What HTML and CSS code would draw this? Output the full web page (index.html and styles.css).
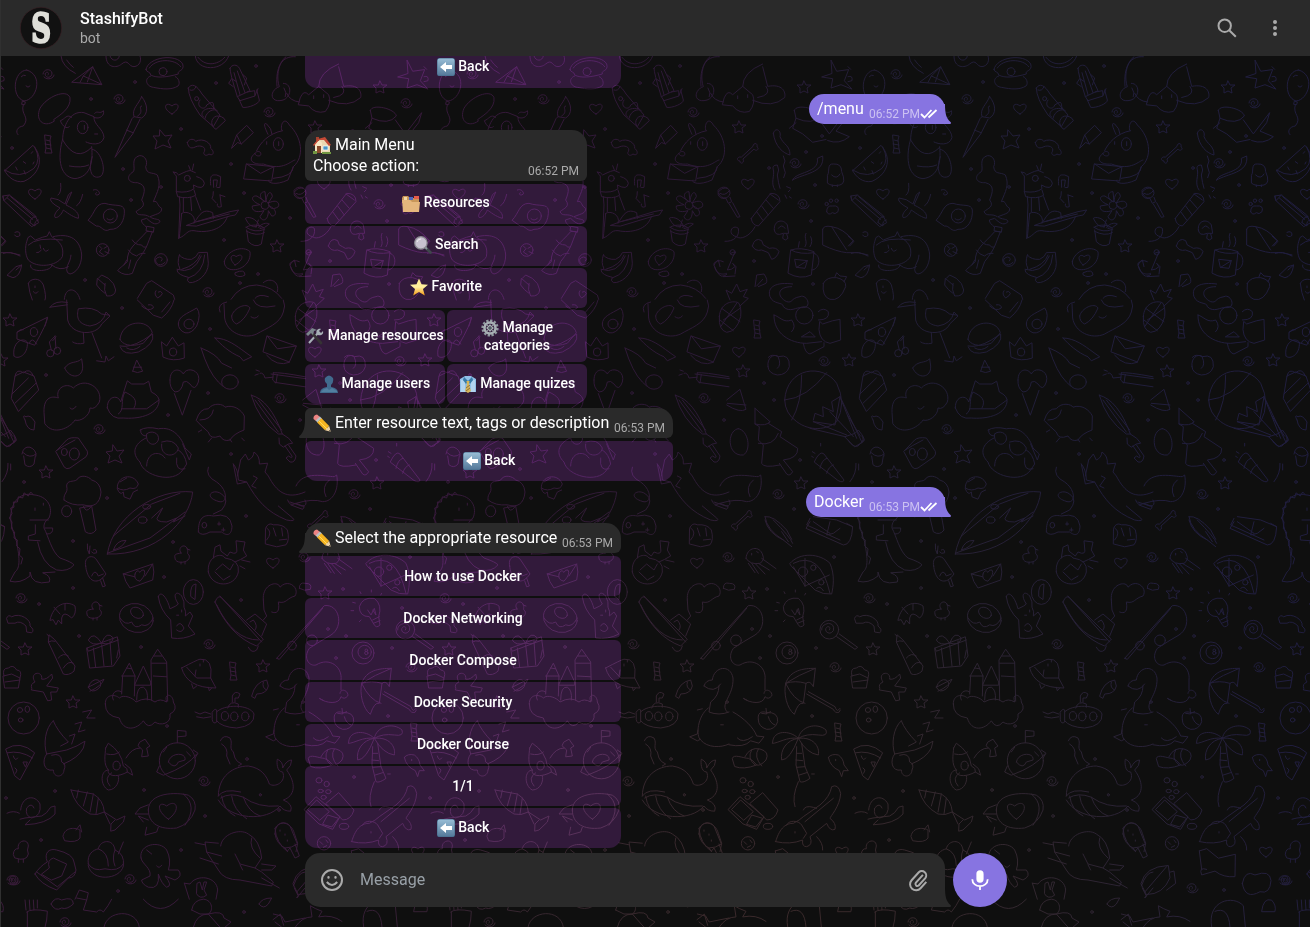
FILE: index.html
```html
<!DOCTYPE html>
<html lang="en">
<head>
<meta charset="utf-8">
<title>StashifyBot</title>
<link rel="stylesheet" href="styles.css">
</head>
<body>
<svg class="wallpaper" width="1310" height="927" viewBox="0 0 1310 927" aria-hidden="true">
<defs>
<linearGradient id="hue" x1="0" x2="1"><stop offset="0" stop-color="#441f45"/><stop offset=".4" stop-color="#3c1b42"/><stop offset=".52" stop-color="#331c3f"/><stop offset=".68" stop-color="#27223f"/><stop offset="1" stop-color="#24214a"/></linearGradient>
<radialGradient id="warm" gradientUnits="userSpaceOnUse" cx="780" cy="960" r="560"><stop offset="0" stop-color="#453030"/><stop offset=".45" stop-color="#403033" stop-opacity=".8"/><stop offset="1" stop-color="#3a2a38" stop-opacity="0"/></radialGradient>
<path id="st" d="M0-6L2-2L7-2L3 1L4 6L0 4L-4 6L-4 1L-7-2L-2-2Z"/>
<path id="he" d="M0 5C-11-1-6-8 0-3C5-8 11-2 0 5Z"/>
<path id="sp" d="M0 1C2-2-2-3-3 0C-2 5 4 4 4-1C3-6-5-5-5 0M-4 3C0 7 6 4 6 1"/>
<circle id="dt" r="1.3"/>
<path id="cd" d="M-3-9L3-8L2-4L3 5L4 9L-3 9L-2 4L-3-4ZM-2-4L2-3M-3 0L3 1M-2 4L3 5"/>
<path id="bn" d="M-7 4C-11 3-12 8-8 8C-8 12-3 10-5 6L6-4C8-1 12-4 9-6C10-11 5-10 5-7Z"/>
<path id="dk" d="M-2-2C-6-7 1-12 4-7C6-3 3-2 6 0C9 8-8 10-8 3C-9-1-7-1-2-2ZM4-6L7-5M-2 7V9M2 7V9"/>
<g id="tile">
<g transform="scale(.33333)">
<path d="M80 210C40 212 32 290 72 303C110 300 132 225 80 210M68 304L76 306L74 314L66 313ZM70 314C60 345 92 350 70 378C52 380 45 395 54 404M64 230Q70 223 76 226M78 258Q84 266 90 258"/>
<path d="M183 168Q186 200 226 220M200 180Q210 195 220 202M216 246L278 200L305 253ZM250 228L278 200L262 246M250 228L240 247M250 228L305 253"/>
<path d="M318 168C318 205 350 205 365 192C385 175 385 200 402 200C420 198 425 180 420 168M330 168C335 185 355 185 358 168"/>
<path d="M438 208C445 170 530 160 548 192C555 215 530 210 535 222C500 232 470 235 452 225C452 214 438 218 438 208ZM448 204C465 175 525 175 542 200M452 228C430 236 440 260 460 262C490 268 515 270 534 258C542 250 535 232 526 230"/><circle cx="489" cy="215" r="12"/>
<path d="M586 168C590 215 670 215 686 168M594 172C620 205 660 190 674 172M690 205C695 192 712 192 719 206L750 272L712 290Q690 220 690 205ZM700 260L686 250L695 236L708 244M733 255L740 234L730 225M742 276L764 272L765 288L720 302L712 290M765 286L774 266M718 300L728 322C745 325 780 310 778 300L770 270M712 213L735 278M702 218L720 284"/>
<path d="M858 170C830 190 830 240 838 260C810 270 808 305 840 302C875 300 880 250 850 250M860 280Q870 303 898 306M852 264Q862 280 856 290"/>
<path d="M162 364C130 385 105 360 120 325C140 290 200 265 210 293C214 325 180 345 162 358Z"/>
<path d="M188 418C188 380 210 330 252 338L282 350C280 375 310 385 312 412C305 440 270 432 258 426M215 352C200 340 195 358 181 362C188 380 200 388 208 380M282 352C300 360 315 345 310 332C300 344 292 330 284 340M188 418C175 460 172 530 225 536C270 530 280 490 275 440M188 420Q228 490 275 442M277 448C305 452 322 520 300 530C270 540 265 500 277 470M208 498Q245 505 266 495"/><ellipse cx="248" cy="382" rx="16" ry="19"/><path d="M253 376v12M284 402h9"/>
<path d="M425 290C445 315 445 342 425 354L402 350C395 325 415 315 425 290ZM402 350L396 356L372 410L345 472L398 402L420 358M379 390L399 398M425 318C412 320 435 335 413 348"/>
<path d="M565 264C575 248 590 255 606 282L660 345L640 380L600 345Q565 295 565 264ZM570 270Q582 275 588 260M600 300C585 320 615 335 620 315C650 295 635 320 645 326C600 320 602 350 610 350M615 355C620 330 645 325 652 332M636 374C630 355 650 338 672 355L676 362L648 388Q640 385 636 374"/><circle cx="590" cy="296" r="6"/>
<path d="M14 512L99 436C130 470 125 520 72 544C45 550 23 530 14 512ZM14 510Q60 540 102 505Q125 480 104 441M47 501l5 9M70 485l7 5M98 455l-4 5M102 486l-3 6M72 512l4 10"/>
<path d="M562 428C568 412 585 418 587 424C610 412 635 430 632 445C645 455 640 470 627 462C615 472 608 460 613 455C620 440 600 435 588 440C568 450 565 438 562 428ZM695 444L710 405L740 376L760 398L724 432L714 428ZM710 405L724 432"/>
<path d="M804 403C795 385 788 365 800 372Q815 385 816 402M845 390C840 370 855 350 868 375C905 410 915 470 880 500L864 540C820 560 800 545 806 540M770 452C780 430 805 400 848 392M765 460C770 450 785 455 782 462C785 470 765 470 765 460C740 480 760 495 790 492C850 515 875 480 885 480M740 492L822 500L815 543L732 537ZM740 492L782 520L822 500M820 535Q880 530 880 500"/><ellipse cx="835" cy="432" rx="15" ry="19"/><path d="M836 425v12M800 425v8"/>
<path d="M9 588L28 585L104 645L116 668L95 680L12 602ZM9 588L12 602L28 585M22 594L98 658M90 668Q90 652 108 650M90 668L105 678Q102 662 115 660M32 590L105 652"/>
<path d="M182 550Q185 580 174 585M248 583Q242 610 230 617M215 577L198 615C230 630 238 642 235 655C215 650 198 635 190 630C185 642 175 655 165 652C160 645 172 630 180 624Q145 605 153 594Q175 595 195 612L205 585Z"/>
<path d="M265 660C285 640 285 610 315 610C345 620 370 610 373 630C375 660 360 690 330 688C310 700 305 675 290 678ZM321 656Q330 665 340 655"/><circle cx="331" cy="648" r="21"/>
<path d="M440 695C410 730 380 745 382 785C360 805 355 808 353 812Q375 830 397 820L410 785C445 740 440 735 457 696ZM385 750Q395 765 410 768Q420 758 435 760M397 720Q405 735 425 735Q430 745 440 740M372 795L380 780M386 805L392 780M440 680L438 692L460 697L462 684ZM440 682C430 672 425 670 424 660L440 655C460 675 470 675 480 665C480 655 460 660 450 650C475 640 485 640 485 625C470 618 475 600 460 605C472 575 485 555 472 525C455 515 440 525 437 500C445 485 435 465 418 467C390 475 408 505 400 515C375 530 385 550 412 548C440 555 435 575 425 600C440 620 420 625 408 635C415 652 430 638 448 650"/>
<path d="M520 516Q530 515 536 525Q565 510 572 512L586 518M572 512L566 497M577 510L581 492M520 516Q525 525 529 528L529 575Q565 580 582 566L580 555Q610 572 613 550Q610 535 590 530M529 575L533 590Q565 598 587 586L582 570M538 590L540 615L536 716M550 594V635M572 592L575 632M587 590L602 630M545 640Q540 690 538 714C560 705 560 690 582 692C620 700 670 690 682 650M545 640C560 630 590 645 582 670C600 640 610 625 638 638L640 655M560 676L590 665L690 635L716 630L706 645L690 648L590 678ZM590 665L688 642M632 555C628 520 640 525 650 525L662 530L660 562Q645 565 650 555L652 540H640L641 562M640 575Q640 590 636 595L648 608M660 585L675 590M660 585L664 620Q650 625 652 612"/><circle cx="562" cy="535" r="9"/>
<path d="M795 605C775 595 778 575 795 575L798 605C800 575 815 570 817 590L804 610C830 595 840 610 835 620C820 630 810 625 808 618C835 630 828 650 815 648L805 632C805 665 785 665 780 650L792 632C765 640 755 630 757 618L780 614C745 600 758 585 770 588ZM780 682C770 650 740 650 736 655Q750 685 770 680M768 682L775 660M775 682C790 665 805 670 808 672Q795 685 780 686M738 682C755 670 790 675 794 688Q765 700 738 682M740 690L745 725Q765 745 784 732L792 690M740 694Q770 710 793 698"/><circle cx="795" cy="616" r="12"/>
<path d="M85 712L92 708L106 720Q130 710 142 708L148 695L155 710C180 725 193 740 187 770C170 800 110 805 85 780C75 765 75 740 80 725ZM85 735Q110 710 187 720M120 735L122 745M124 750Q118 760 110 758M130 745Q135 760 145 750M160 710C200 700 240 710 245 765C245 800 225 820 210 822Q190 818 210 780Q215 760 212 765M92 795C85 820 160 815 155 795M155 795Q180 815 205 800"/>
<path d="M10 760Q30 752 60 768M22 825L48 800L65 795Q60 830 40 833ZM48 810L65 795M280 570C290 565 300 575 298 582C290 590 280 580 290 578M45 697Q60 690 60 706Q50 715 44 705M0 708L18 724L5 738"/>
<circle cx="308" cy="750" r="19"/><path d="M298 738l8 8l-8 10l12 8M312 745l10-6M315 755l12 5"/><circle cx="483" cy="780" r="19"/><path d="M484 783q8-10-6-12q-16 4-9 18q12 12 26-2"/>
<path d="M538 765Q550 780 575 778Q592 770 595 758L622 757L625 790C625 825 590 850 568 848Q558 842 565 832Q535 825 531 812L540 805Q530 790 538 765ZM531 808Q580 825 604 768M565 834Q610 820 614 765M545 808Q590 795 600 765"/>
<path d="M673 785C680 750 730 735 750 755C755 790 720 815 690 808Q672 802 673 785ZM706 818Q735 805 735 825Q720 835 706 825ZM705 795C680 770 700 760 708 770C730 755 735 780 705 795Z"/>
<path d="M870 795Q878 775 898 785M872 800Q885 835 900 828M884 575Q895 560 910 565M884 580Q890 595 905 594M85 850C90 835 120 830 130 855Q140 890 135 900M85 850Q88 880 97 900M105 858v5M100 875q8 10 14 0M193 898C195 860 230 860 240 898M315 855L292 835L290 855Q300 870 315 880M295 835L305 825L325 835Q345 850 347 870Q345 890 320 888Q310 870 315 850M412 895L440 850L455 842L520 885L524 898M468 872q-8 10 5 22q14-8 14-14q-4-10-12-4M693 898Q720 855 770 855Q820 860 845 895M790 848C810 830 840 845 832 875M765 895Q775 880 805 890"/>
<path d="M0 230Q15 225 12 242L0 245M0 200L8 208"/>
</g>
<use href="#he" x="172" y="109"/><use href="#he" x="35" y="194"/><path d="M160 130L165 136L172 135L168 141L171 148L163 145L155 149L157 141L153 136L159 136Z"/><use href="#st" x="277" y="246"/>
<use href="#sp" x="48" y="74"/><use href="#sp" x="119" y="99"/><use href="#sp" x="269" y="112"/><use href="#sp" x="208" y="292"/><use href="#cd" x="48" y="144"/>
<use href="#dt" x="91" y="99"/><use href="#dt" x="135" y="82"/><use href="#dt" x="216" y="83"/><use href="#dt" x="256" y="66"/><use href="#dt" x="181" y="129"/><use href="#dt" x="12" y="148"/><use href="#dt" x="123" y="169"/><use href="#dt" x="161" y="187"/><use href="#dt" x="231" y="164"/><use href="#dt" x="131" y="200"/><use href="#dt" x="244" y="193"/><use href="#dt" x="290" y="218"/><use href="#dt" x="224" y="240"/><use href="#dt" x="258" y="274"/><use href="#dt" x="85" y="280"/><use href="#dt" x="240" y="283"/>
<g transform="translate(0 300) scale(.33333 .4)">
<path d="M150 18Q165 0 202 6M150 18L202 12M200 0L203 50C215 90 290 90 305 60L330 40L318 30Q310 60 270 65C230 60 230 40 235 22Q280 15 305 35L328 38M250 82L252 108Q230 112 218 105M276 82L305 145M290 152L315 155L318 140L325 152L342 142"/>
<path d="M52 80L143 43Q140 60 104 113L52 98ZM52 80Q60 72 70 74M42 140C35 110 65 90 82 105C85 140 50 150 42 140M88 108Q95 90 110 110M142 44L135 65"/><circle cx="102" cy="80" r="11"/>
<path d="M165 90L148 105L154 125M165 90L168 122M158 102l10-10"/><ellipse cx="151" cy="133" rx="11" ry="9"/><ellipse cx="172" cy="127" rx="10" ry="9"/>
<path d="M194 170C210 150 230 160 245 147L248 165C250 195 210 200 194 170M360 98C365 50 445 45 457 82L430 108C390 120 365 110 360 98ZM360 115Q390 120 430 100L458 85Q465 110 415 130Q370 140 361 118M380 120Q400 130 420 116"/>
<path d="M412 0L460 38L485 45Q515 25 522 0M425 15Q445 30 460 20Q460 10 445 12M485 30L510 5M535 60C535 40 560 35 590 20Q605 35 590 65Q575 85 555 82Q535 75 535 60"/><ellipse cx="567" cy="60" rx="15" ry="12"/>
<path d="M660 30Q650 10 680 5M672 10L674 45C680 80 730 100 770 85C800 70 840 60 850 30Q858 15 850 0M695 40C700 20 740 5 750 20Q735 50 710 60Q695 55 695 40M760 0Q770 25 825 15M753 42Q765 50 775 40"/>
<path d="M485 105L500 115L517 93L535 115L552 107L553 145Q520 155 490 143ZM645 95C680 95 710 115 735 130L755 142L730 152L720 142C690 132 660 110 645 95ZM603 120Q650 135 665 158L695 170M603 120Q625 180 655 205L668 215"/><ellipse cx="690" cy="205" rx="25" ry="18"/><ellipse cx="519" cy="130" rx="11" ry="10"/>
<path d="M802 90L889 115L868 155L790 130ZM802 90L832 122L889 115M800 138Q830 168 868 156"/>
<path d="M398 178L410 150L428 178Q412 185 398 178M400 168H425M34 245L45 190L70 180L102 190L116 225L56 278ZM45 190Q50 170 70 182Q90 168 100 190M36 235L85 195M45 258L108 208"/>
<path d="M510 200C510 170 540 170 550 185C560 165 605 175 595 205Q585 230 570 210Q560 200 550 205Q545 230 525 230Q508 220 510 200M523 234L547 288L573 226"/>
<path d="M132 280C130 240 160 240 175 245C165 220 200 205 220 220C255 190 310 220 298 255Q285 275 270 270C270 290 240 305 225 300C210 320 160 340 135 310ZM210 270q8 8 18-4"/>
<path d="M322 270C320 240 355 235 362 255L375 220L382 202L395 210H432L446 203L454 230Q480 240 477 255C470 290 410 298 370 295Q335 300 322 270ZM355 285C375 275 360 250 375 230C400 240 415 250 402 270M365 272H440L477 250"/>
<path d="M589 300Q600 270 625 272C640 255 670 260 675 268C700 260 725 275 733 290L732 325Q700 335 690 350Q670 355 660 340Q630 350 625 330L605 315ZM600 300Q635 300 640 275M635 345L625 355M690 348L695 355M595 330L605 325M725 345L733 352"/>
<path d="M820 182Q840 180 915 192M825 206L915 217M820 182L818 200L828 208L832 186M819 193L795 195Q790 180 780 183M768 175l10 3M765 188l10-3"/>
<path d="M754 238Q810 250 847 335L835 335Q775 300 754 238ZM765 250L835 330M775 250L845 325M847 335Q870 345 878 358L865 360L850 368L838 360L837 345M865 362L888 390Q885 408 870 405L858 395L866 390Q878 398 876 390L855 365"/>
<path d="M75 300Q65 285 78 292Q90 285 105 305L102 325Q80 325 75 300M0 290L37 340M47 350L30 365Q15 370 0 350M42 340Q50 350 40 358M66 385Q70 365 90 368Q110 375 108 390M70 382Q90 398 108 385M71 390L75 412Q90 422 102 410L106 390"/>
<path d="M168 378L200 350Q210 342 235 345L262 378Q265 385 258 392L210 420Q200 425 193 418ZM170 376Q190 365 225 350"/><circle cx="193" cy="380" r="9"/><circle cx="223" cy="385" r="15"/>
<path d="M420 325Q440 315 475 322C520 315 545 345 555 370L574 385L568 400L548 360M440 335C435 360 465 370 475 350C480 330 450 325 440 335M422 325Q420 340 440 340M485 360C480 395 530 395 535 370Q520 345 485 355M438 345C400 360 395 385 420 405C430 440 520 460 548 425L560 410Q555 385 535 375M440 415C440 380 480 375 495 395M530 395Q525 430 555 422"/>
<path d="M625 418Q615 440 650 455C685 475 685 515 650 502C610 490 640 470 665 485Q690 500 665 525L640 535M595 580C595 545 610 535 640 540Q690 530 696 565C695 590 680 590 665 580H630Q605 592 595 580"/><circle cx="613" cy="563" r="7"/><path d="M657 555v8M653 560h9M670 570v8M665 575h10"/>
<path d="M700 410Q715 425 715 450L740 455C770 500 800 530 860 550Q890 555 878 545L835 515M722 400L736 385L745 400Q760 395 762 380Q780 390 778 410L803 408L795 430L805 440C830 480 860 500 915 480M722 400L712 440M700 410L712 460L740 455M870 505L905 515Q925 515 915 500M768 470L755 465L772 445L760 440"/>
<path d="M352 470C350 440 400 430 415 460Q410 475 390 470Q370 480 352 470M352 472Q360 490 370 480L372 492L390 498L400 480L413 475M360 455L380 445"/>
<path d="M192 500C190 480 205 485 200 465C200 450 220 455 230 450C240 435 265 440 275 450Q300 455 303 480C300 510 280 520 250 512Q215 515 192 500M240 520L275 515L288 575Q275 590 257 580ZM250 515Q258 535 272 518"/><ellipse cx="200" cy="528" rx="15" ry="14"/>
<path d="M322 635C340 540 470 470 578 480C570 550 470 640 322 635ZM340 590L455 510L540 483M322 633L450 595L555 530M455 545L488 520L475 540Q460 555 500 555L530 545L520 555L555 540"/><ellipse cx="440" cy="517" rx="12" ry="6"/><ellipse cx="428" cy="550" rx="13" ry="8"/><path d="M340 625q10-25 38-24q-10 18-38 24"/>
<path d="M32 540C35 500 65 480 100 487C145 490 160 520 147 545Q130 555 132 570C145 590 155 630 180 645Q215 655 222 662Q205 680 170 675Q125 660 113 605M32 540Q30 560 50 605C60 650 60 670 45 680L30 703Q60 710 90 690V680Q95 715 148 705Q155 690 128 682L165 680M90 550H145M106 562V585L85 590L85 600L120 602M135 570L158 570Q160 585 142 585M105 520v6M130 508v5"/>
<path d="M100 487L92 480L85 490L72 482L68 495L55 492L52 505L40 505L42 518L32 520L36 534L28 545L36 555L34 572L44 580L42 595L52 600L50 615L60 622L58 638L68 645L63 660"/>
<path d="M257 665C250 640 280 635 290 650L318 685Q310 695 300 700C275 710 260 690 257 665ZM275 690Q285 670 295 690L310 685M302 702L308 717L316 715L308 695M262 610Q260 625 268 635L270 615M280 625Q290 620 290 632Q280 636 275 630"/>
<path d="M370 685L458 660Q465 680 458 700L390 720Q375 705 370 685ZM370 685L405 692M458 660L435 690M405 685q-5 15 15 18q20-18 12-28q-8-2-12 6q-10-10-15 4"/>
<path d="M625 680C620 640 665 630 675 645Q720 650 715 680C705 720 635 720 625 680ZM640 645L645 618L660 612L663 628L682 640L690 630Q715 640 710 620L708 602L735 605L730 625L740 640Q720 650 705 655M725 650L750 655M720 665L735 672M648 675L668 660L690 675L700 660M645 680L670 700L690 690"/>
<path d="M797 570Q805 555 820 562Q850 560 862 575Q870 600 858 612L830 617L797 610ZM800 600Q820 580 800 570M820 570L828 590M845 570L848 590M838 600L860 598"/>
<path d="M475 742C480 725 500 740 510 772Q530 765 535 760C515 735 530 725 545 740Q555 755 552 768Q560 780 556 790L570 780L578 790L565 815L585 835Q550 850 515 845L512 800Q480 775 475 742ZM530 815Q540 800 552 820Q545 835 530 825M530 788h6M545 775v5"/><ellipse cx="580" cy="730" rx="30" ry="31"/><path d="M572 740Q570 710 588 710L585 748Z"/>
<path d="M150 800C160 760 200 750 225 765Q230 785 215 795Q190 775 185 795L185 810L175 800L168 812L160 800ZM162 768L180 785M195 760V775"/>
<ellipse cx="409" cy="795" rx="51" ry="36" transform="rotate(8 409 795)"/><ellipse cx="411" cy="782" rx="20" ry="13" transform="rotate(20 411 782)"/><path d="M360 795Q375 815 395 805Q405 825 425 812Q445 820 460 795"/>
<path d="M20 795Q25 785 35 792C60 780 95 800 90 815Q105 825 95 832L80 830L78 815Q60 800 45 808L25 808Z"/>
<path d="M645 755Q655 735 665 745L790 848L770 865Q690 840 645 755ZM660 740L785 855M650 762Q700 850 775 850M740 800L765 785L800 810L785 840M750 805L760 800Q775 815 765 825M745 868Q755 885 770 875L775 865M790 750C785 710 835 700 840 718C865 695 900 720 885 740C860 745 860 760 835 755C840 780 830 785 815 780M790 750L792 775L800 790L790 800"/>
<path d="M147 838L145 855L190 935Q205 940 222 928L225 915L165 850ZM145 855Q155 850 165 853M175 895Q190 880 205 890M190 920Q205 900 220 908M141 836l6 4"/>
<path d="M261 870L352 842L360 890L340 915L270 920ZM261 870L265 878L355 850M280 870L287 918M305 862L312 915M330 852L335 912M305 858Q280 825 265 850Q275 865 305 858Q320 825 340 845Q335 865 305 858M355 875L350 895"/>
<path d="M365 985L368 938L388 908L405 940L403 990M365 940H405M405 960L430 915L452 955V963H405ZM455 1000L453 900L473 873L500 905L503 1003M455 908H500M410 1000Q410 965 430 968Q445 975 442 1000M460 940L500 942M380 920L395 922M462 890H485"/><path d="M316 1010C315 985 345 985 358 995C370 985 400 995 408 1005Q440 990 465 1005Q480 995 500 1005C490 980 520 985 520 1005Q535 1025 510 1035C515 1060 480 1065 465 1055Q445 1075 430 1052C410 1075 370 1080 358 1045Q315 1040 316 1010ZM340 1000C330 985 350 970 365 980"/>
<path d="M545 920Q590 900 600 898Q640 895 632 945L648 970Q560 970 545 920ZM560 918L590 945L632 945M575 960L580 972L590 965M625 968L628 977L635 970M600 910v5M610 900v5M588 925L585 940"/>
<path d="M10 940L35 935L60 945L55 970H15ZM12 940Q5 920 25 920Q40 910 50 925Q68 925 60 945M15 955L60 950"/>
<path d="M95 970Q90 960 105 955C85 930 130 925 125 948Q140 950 155 935L158 945L140 965L175 970L170 980L152 980L155 1000L143 1002L130 980L95 975Z"/>
<ellipse cx="71" cy="1045" rx="47" ry="40"/><ellipse cx="60" cy="1025" rx="8" ry="6"/><ellipse cx="82" cy="1023" rx="7" ry="8"/><ellipse cx="62" cy="1050" rx="7" ry="5"/>
<path d="M265 968Q275 945 295 950Q310 960 295 972Q275 985 265 968M265 968L312 948Q305 965 270 978M755 990Q765 955 800 950L805 965Q800 985 770 985L765 995ZM790 955Q785 970 800 975"/>
<path d="M585 1030L600 1035L615 1030L632 1035M590 1042L610 1045L632 1042M637 1030Q645 1020 650 1025V1055Q640 1062 637 1050ZM650 1030C670 1010 750 1010 762 1035Q765 1065 710 1070Q665 1068 650 1052M683 1020Q690 1000 715 1010V1018M697 1005V990Q705 975 720 985L715 995H705V1005"/><ellipse cx="675" cy="1040" rx="11" ry="11"/><ellipse cx="703" cy="1041" rx="11" ry="11"/><ellipse cx="736" cy="1041" rx="11" ry="11"/>
<path d="M840 965Q845 950 865 950C870 915 920 910 927 945C930 990 885 1010 910 1030M840 965Q870 985 890 960M885 965Q885 990 860 1005L855 1030Q885 1040 915 1030M853 1020C820 1040 815 1090 830 1100C850 1120 890 1120 915 1110M822 1075L820 1085L797 1092L820 1102L830 1098M820 1025L835 1022M927 1030C960 1045 990 1070 998 1090L1020 1092L1005 1108L980 1102Q960 1120 915 1112M890 1062h8M940 1095Q955 1110 985 1092"/>
<path d="M160 1052C135 1070 130 1110 140 1135L200 1125Q235 1115 255 1103L250 1120Q235 1145 190 1160M160 1052Q170 1075 205 1105L182 1115M140 1135C125 1150 130 1180 160 1175C160 1195 190 1195 192 1175Q200 1160 185 1155Q185 1130 155 1138M208 1090L225 1085L215 1110M225 1060L245 1055L235 1080L255 1075M248 1030L275 1025L260 1045L285 1045"/>
<path d="M18 1122Q60 1100 104 1132L60 1200L45 1190ZM22 1132Q60 1125 98 1145M40 1140Q45 1155 53 1145M70 1155l12 0l-5 12ZM45 1170l6 5l-4 8"/>
<path d="M317 1120L325 1108Q365 1130 370 1165Q385 1170 382 1180C350 1195 320 1190 325 1175C310 1160 315 1140 317 1120ZM320 1135Q345 1140 358 1130M325 1175C300 1175 300 1215 325 1225C350 1225 360 1200 355 1190M335 1182Q310 1195 330 1215M378 1145Q395 1120 420 1120M382 1180L398 1188L392 1172L375 1160M420 1105L435 1098L445 1110L450 1115L440 1120L445 1140L425 1142L428 1125L415 1115Z"/><circle cx="350" cy="1164" r="11"/>
<path d="M532 1107V1076L558 1078V1090L534 1092"/><ellipse cx="532" cy="1152" rx="54" ry="45"/><path d="M580 1125L594 1133L585 1145M478 1165L470 1180L490 1188Q565 1165 590 1135M505 1155C510 1130 560 1130 555 1150L535 1155Q525 1175 505 1155M490 1130l10-12M560 1130l12 10"/>
<path d="M661 1102Q670 1085 690 1095C700 1110 685 1118 700 1130L705 1145Q710 1155 725 1160L715 1165M665 1110Q685 1120 680 1140L690 1160M655 1240C655 1190 700 1165 745 1165C785 1170 800 1190 808 1210C825 1220 860 1205 848 1180C830 1180 830 1155 832 1148Q850 1155 848 1170Q860 1150 875 1150Q875 1165 860 1175C890 1210 885 1240 850 1250Q880 1260 872 1278Q850 1278 840 1265C800 1305 690 1300 655 1250M655 1240Q670 1220 722 1230M662 1245Q690 1230 730 1243Q775 1270 835 1265M730 1243Q745 1280 780 1290M665 1240Q670 1275 705 1290M695 1240Q700 1275 740 1297"/><circle cx="781" cy="1237" r="3"/>
<path d="M21 1283Q40 1275 58 1283M62 1275C65 1240 105 1235 120 1260Q125 1290 95 1295Q75 1290 80 1270Q95 1255 102 1270M60 1298L75 1295L125 1290Q140 1285 152 1268L165 1265L165 1285Q140 1310 75 1312L90 1300"/>
<path d="M213 1225L280 1235Q310 1250 313 1280Q290 1290 270 1285Q225 1265 213 1225ZM235 1225L230 1245M262 1230L250 1265M280 1235L270 1280M295 1245L288 1285M313 1280L350 1300L375 1290L370 1305L345 1325L332 1328L333 1310L345 1300M313 1280L330 1310"/>
<path d="M445 1275C445 1230 530 1230 565 1238Q590 1250 585 1275Q570 1310 530 1320C480 1325 445 1310 445 1275ZM445 1262L420 1270L405 1285L445 1285M445 1300L415 1290L430 1305M440 1318L435 1338L470 1330L475 1318M550 1235Q595 1265 555 1313M505 1298C465 1275 475 1250 500 1265C530 1245 545 1275 505 1298Z"/>
<path d="M189 1340C195 1315 230 1320 240 1325L240 1345Q230 1358 195 1352ZM228 1325L240 1312L245 1330M40 1385Q42 1370 55 1372C50 1350 85 1345 85 1365Q80 1375 85 1385Q80 1405 45 1395ZM55 1398V1406M70 1398V1406"/>
<path d="M105 1435Q120 1415 142 1405C130 1380 150 1370 170 1375Q220 1385 222 1405L228 1425Q225 1445 205 1445L170 1475Q120 1460 105 1435ZM125 1435L148 1420Q140 1400 160 1395Q185 1405 200 1410L185 1440L155 1450ZM110 1430L172 1467L225 1430"/>
<path d="M265 1410C260 1385 280 1375 295 1372C300 1350 340 1345 345 1375Q375 1385 370 1415C360 1450 275 1455 265 1415ZM265 1410Q280 1430 315 1422Q355 1430 370 1410M295 1372Q325 1380 325 1415M345 1375Q335 1395 345 1415M355 1385L370 1355"/>
<path d="M423 1395C415 1360 480 1350 500 1375Q515 1400 505 1425L535 1425Q550 1440 525 1450L495 1440Q520 1465 500 1468Q485 1460 475 1435Q480 1475 445 1468Q425 1460 425 1450L450 1440C455 1420 425 1410 423 1395M470 1415q8 8 15-2M440 1375l15 10"/>
<path d="M662 1365C665 1335 720 1320 745 1335Q780 1350 785 1395L765 1420L785 1430L820 1455L815 1465L720 1450Q670 1450 655 1425L620 1380L615 1355L655 1358M585 1357L615 1362M600 1395L655 1410M620 1380L665 1390M785 1410L828 1415L815 1425L785 1425M720 1412L728 1425M765 1420L720 1410L705 1385M755 1345Q745 1370 780 1395M785 1445L838 1470"/>
<path d="M825 1335C825 1305 855 1300 870 1315L892 1360Q875 1370 855 1370Q830 1360 825 1335ZM855 1370L862 1378L870 1370L885 1395L898 1390L885 1360M840 1325v3M855 1335v3M862 1350v3"/>
<path d="M553 1458L570 1460C590 1435 650 1440 653 1475L648 1498M553 1458L568 1498M590 1485Q600 1500 620 1488L612 1475L620 1455L612 1455L607 1475L600 1455L592 1458ZM880 1465Q895 1430 915 1430M883 1470L895 1490L890 1495L915 1470"/>
<path d="M75 1500L78 1525M88 1500L90 1525M100 1500L102 1525M112 1500V1520M80 1530Q95 1520 142 1528L140 1550L135 1568M82 1530V1568M153 1510Q165 1490 185 1500Q220 1490 220 1510Q200 1525 185 1520Q165 1530 153 1510M225 1498L238 1475L265 1482L260 1500L230 1495M260 1500L250 1525L290 1530Q300 1520 310 1530Q325 1515 335 1498M430 1498Q480 1545 535 1498M312 1568C320 1525 410 1520 418 1568M575 1525Q580 1500 610 1498C640 1500 640 1530 625 1535M575 1525L600 1535L625 1535Q670 1525 672 1545L693 1555L675 1568M580 1568Q590 1535 625 1535L660 1568M777 1510Q785 1495 815 1495L805 1510Q790 1525 777 1510M820 1535L845 1540L855 1555L915 1545M825 1555L845 1568"/>
</g>
<use href="#st" x="10" y="320"/><use href="#st" x="46" y="472"/><path d="M113 445L117 451L124 450L119 456L122 463L115 460L108 463L110 456L106 452L112 451Z"/><use href="#st" x="25" y="649"/><use href="#st" x="73" y="702"/><use href="#st" x="263" y="666"/><use href="#he" x="273" y="563"/><use href="#dk" x="183" y="555"/><use href="#dk" x="95" y="611"/><use href="#cd" x="233" y="671"/>
<use href="#sp" x="99" y="429"/><use href="#sp" x="280" y="398"/><use href="#sp" x="21" y="598"/><use href="#sp" x="209" y="644"/><use href="#sp" x="204" y="781"/><use href="#sp" x="14" y="880"/><use href="#sp" x="130" y="879"/><use href="#sp" x="65" y="922"/>
<use href="#dt" x="122" y="308"/><use href="#dt" x="210" y="329"/><use href="#dt" x="46" y="375"/><use href="#dt" x="168" y="415"/><use href="#dt" x="208" y="393"/><use href="#dt" x="231" y="454"/><use href="#dt" x="24" y="482"/><use href="#dt" x="96" y="469"/><use href="#dt" x="107" y="498"/><use href="#dt" x="73" y="541"/><use href="#dt" x="173" y="542"/><use href="#dt" x="164" y="577"/><use href="#dt" x="246" y="516"/><use href="#dt" x="73" y="588"/><use href="#dt" x="39" y="604"/><use href="#dt" x="79" y="636"/><use href="#dt" x="141" y="647"/><use href="#dt" x="241" y="600"/><use href="#dt" x="167" y="726"/><use href="#dt" x="247" y="759"/><use href="#dt" x="55" y="791"/><use href="#dt" x="144" y="790"/><use href="#dt" x="6" y="798"/><use href="#dt" x="279" y="810"/><use href="#dt" x="205" y="816"/><use href="#dt" x="41" y="840"/><use href="#dt" x="181" y="850"/><use href="#dt" x="118" y="891"/><use href="#dt" x="244" y="912"/><use href="#dt" x="300" y="420"/>
<g transform="translate(216 120) scale(.33333)">
<path d="M235 210C245 195 270 200 270 220C265 240 240 240 235 225ZM258 236L265 250L275 245L270 232M268 252L292 292L300 290L278 248M240 220Q255 230 268 212"/>
<path d="M400 40C405 20 425 30 420 50C430 75 450 75 450 105C430 100 405 80 400 40M405 210C390 190 405 165 400 150Q395 135 412 135Q420 150 412 165Q415 190 420 205M430 108l5 15l-5 15l6 20l-5 15M458 180C465 155 540 160 532 115L548 108C555 160 490 160 458 180ZM334 295L392 220Q420 220 420 245L355 318Q335 315 334 295ZM350 275L368 300M365 258L385 285M378 240L400 265M390 222L415 240M345 320C330 350 300 360 290 350C260 345 275 310 295 325C300 350 280 365 255 364M440 200l12 5M450 210l-5 5M435 225l5 10M448 230l6 4"/>
<path d="M403 330C400 300 430 295 442 315L446 340L430 340Q405 350 403 330M415 325Q425 310 435 325M430 343L428 355L436 360L444 355L440 342"/>
<path d="M548 328Q550 315 575 320Q610 325 640 362L625 378M548 328V375Q590 395 620 398L655 398L684 405M575 320Q590 345 620 390"/>
<path d="M563 165C570 155 560 130 580 132Q605 130 605 155Q620 190 600 195Q575 200 563 190ZM575 165Q590 180 600 162M577 195V200M592 195V200M560 275Q560 255 577 258Q600 255 594 275Q585 285 577 278Q565 288 560 275"/><circle cx="560" cy="252" r="5"/><circle cx="573" cy="242" r="5"/><circle cx="590" cy="242" r="5"/>
<path d="M337 378Q345 350 365 362L370 375Q380 380 388 385Q410 380 417 395Q410 415 395 418L385 398L365 390Q345 395 337 378M453 390Q480 380 522 395L514 465Q480 480 445 460ZM453 390Q480 405 522 398M522 400C545 405 540 450 515 450M465 418L502 422L495 445L470 442ZM470 442L502 422M475 382L478 365M495 380C505 365 490 355 498 340M510 380Q520 365 512 350"/>
<path d="M222 430L235 420L240 440M222 432C225 465 250 465 260 460M260 463L250 470L285 468M272 400L285 395L262 450Q275 450 285 440L278 430L288 440L285 462M345 500L350 465L372 462Q385 480 378 490L355 500M350 498L368 478M550 490Q560 470 590 473Q620 480 617 500Q600 545 570 538Q545 530 550 490ZM585 470L590 458L600 468L620 470L612 485"/><circle cx="278" cy="397" r="8"/>
<path d="M238 590C240 550 275 540 295 548Q305 560 302 590Q290 635 260 637Q235 630 238 590ZM245 565L300 605M240 600L280 632M250 600L300 565M242 620L290 550M270 540L258 510L275 520L290 492L300 515L322 508L310 530L325 535L300 558"/>
<path d="M458 492C410 485 380 500 390 530C400 555 430 545 430 560C450 580 470 560 485 563C520 565 500 520 480 530C450 535 460 550 440 545C410 530 410 500 455 500M402 585C400 640 450 670 500 670L545 665M402 585C420 590 430 610 455 600Q470 620 455 635M540 605L548 612Q580 600 600 598L602 660L570 670Q540 665 537 630ZM490 670Q495 700 510 702L552 680V668M535 575Q550 560 565 575Q570 600 535 600M485 650L510 635L525 650Z"/><circle cx="493" cy="586" r="26"/>
<path d="M384 740C380 710 405 700 415 710Q450 700 448 740Q440 765 412 765Q385 760 384 740M415 710Q395 700 385 712M415 712Q425 735 412 745"/>
<path d="M434 840C440 740 550 730 590 790Q620 850 590 905C560 930 510 935 470 905Q435 880 434 840ZM434 840Q500 835 560 758M485 765Q485 850 455 900M520 900L525 880L550 890L548 860L580 875L575 845L600 830M600 830L650 955M605 840L665 965M520 905L620 945M510 925L615 950M570 875L640 950M615 950L645 940L655 930Q680 960 670 965L645 980ZM600 830L585 915L520 905"/>
<path d="M260 840L300 808L318 868Q300 880 260 855M262 850L318 855M345 865L390 905L385 910L425 935L420 950L473 985Q475 1015 430 1020L458 1055Q450 1070 440 1062L418 1030M345 865V912L358 920L355 960L370 975L365 1030Q370 1045 420 1035M355 970Q400 980 415 940M345 912Q380 920 390 905M295 926C325 930 335 990 310 1005C260 1010 260 930 295 926"/>
<path d="M165 762L268 776M523 1025Q540 990 552 1002L612 1080Q610 1090 595 1082ZM540 1045Q545 1020 560 1015M560 1060Q565 1040 580 1035M517 995l8 5M542 970v8M520 1012l-5-3M648 1030Q650 1060 630 1085M656 1032V1050"/>
<path d="M240 1098C260 1050 330 1070 355 1070L362 1065C370 1110 350 1145 320 1145Q290 1135 240 1150Q220 1160 215 1140M340 1080Q315 1100 330 1130M225 1155L260 1168L265 1160L240 1150M375 1190Q400 1185 440 1230L455 1258M375 1190Q380 1230 430 1260M510 1195L500 1215L600 1260M520 1190L590 1200L638 1220"/>
</g>
<use href="#bn" x="324" y="153"/><use href="#he" x="324" y="184"/><use href="#he" x="315" y="352"/><use href="#st" x="319" y="371"/><use href="#st" x="425" y="360"/><use href="#st" x="377" y="483"/><use href="#bn" x="318" y="520"/><use href="#st" x="315" y="127"/><use href="#cd" x="333" y="329"/>
<use href="#sp" x="371" y="163"/><use href="#sp" x="379" y="204"/><use href="#sp" x="400" y="361"/><use href="#sp" x="354" y="494"/>
<use href="#dt" x="345" y="168"/><use href="#dt" x="391" y="185"/><use href="#dt" x="387" y="221"/><use href="#dt" x="330" y="261"/><use href="#dt" x="389" y="284"/><use href="#dt" x="340" y="383"/><use href="#dt" x="350" y="400"/><use href="#dt" x="376" y="460"/><use href="#dt" x="370" y="509"/><use href="#dt" x="382" y="152"/>
<g transform="translate(216 520) scale(.33333)">
<path d="M375 0Q385 40 430 60L455 80M400 0Q450 50 458 70M425 35L445 65M510 5L498 25L610 75Q635 75 638 20L620 10M570 5L560 45L580 40L600 25M520 5L570 40"/>
<path d="M318 115C320 80 360 75 368 105Q375 120 360 130Q330 135 318 115M325 130L345 158M335 130L355 160M345 130L375 162M355 130L388 150M365 115L408 146M350 95l5 3M335 100v5"/>
<path d="M450 130C480 95 540 100 570 130C585 165 580 200 575 222Q550 225 525 210L455 140ZM460 130Q540 90 570 220M495 115V198M495 198L568 165M495 198L460 140M530 205Q540 195 550 212"/><circle cx="489" cy="155" r="14"/><circle cx="520" cy="143" r="8"/><circle cx="544" cy="187" r="8"/>
<path d="M472 310L460 290Q430 290 430 260Q440 230 475 235Q500 255 488 290L492 315Q480 328 472 310M455 270L465 285L475 265L480 285L470 270M470 300L490 290M472 310L492 302M410 247l8 2M432 215l3 6M466 210v6M497 220l-3 5M405 272h8M430 305l5-5"/>
<circle cx="568" cy="329" r="28"/><path d="M568 330q6-10-5-10q-10 5-5 14q12 12 22-2q5-20-15-22q-22 5-20 20M590 350L645 388L653 382L598 342"/>
<circle cx="441" cy="399" r="33"/><circle cx="446" cy="396" r="20"/><circle cx="451" cy="391" r="4"/><circle cx="451" cy="399" r="5"/>
<path d="M250 205Q250 185 268 190Q290 190 283 208Q265 215 250 205M182 415L325 257C370 250 385 320 345 345Q310 365 280 385C260 415 280 440 300 435C340 410 380 440 375 480V510M182 415L190 418L320 265M372 520C375 500 400 515 395 528Q385 540 375 530C370 555 330 550 310 535L320 540"/><circle cx="288" cy="361" r="16"/><circle cx="228" cy="377" r="13"/>
<path d="M437 490C450 450 490 445 526 445L520 500Q510 480 498 490L490 550Q475 545 463 583C440 565 430 520 437 490ZM437 490Q465 480 498 490M526 445Q475 465 437 490Q460 540 495 550M505 515L585 560Q590 575 595 570L600 565M500 522L580 568Q585 580 597 577L601 570"/>
<path d="M355 600C350 570 375 575 380 578Q415 575 413 605Q405 630 380 628Q355 620 355 600M365 580L380 582L378 565M380 580L392 575M385 590Q390 610 405 615"/>
<path d="M398 665C400 630 450 630 475 655C440 650 415 670 398 670ZM475 655C480 620 530 605 558 630Q565 650 535 645Q500 640 475 655C520 650 540 680 535 705Q500 700 475 655C440 660 420 690 425 720Q450 720 475 655M470 680L468 735L480 785Q490 790 510 775L495 740L485 670M470 700H485M468 720L488 722M470 742L495 740M478 765L500 758M515 762H523"/>
<path d="M277 715C280 700 310 715 325 715Q340 720 350 735Q310 750 285 740ZM315 710Q330 680 360 687Q390 695 378 720Q360 740 350 735M335 690Q320 715 345 735M355 687Q340 710 365 738"/>
<path d="M565 712Q575 700 595 705Q610 715 612 735L625 752L610 752L605 770L598 752Q570 740 565 712M587 718v4M265 868L300 830L372 890L350 928L310 912ZM275 868L302 840L340 875L312 900ZM320 912L335 885L368 895L348 920ZM330 850L368 818L414 870Q405 900 380 900L345 865Z"/><ellipse cx="309" cy="781" rx="9" ry="8"/><circle cx="332" cy="792" r="8"/><ellipse cx="314" cy="813" rx="8" ry="5"/><ellipse cx="337" cy="815" rx="8" ry="6"/><ellipse cx="323" cy="832" rx="8" ry="6"/><ellipse cx="384" cy="919" rx="14" ry="9"/>
<path d="M407 965C420 920 440 910 460 910Q480 900 490 890L540 855Q570 830 575 800Q595 790 602 820C600 860 570 890 570 895Q590 910 585 928Q570 935 560 910L510 950Q520 975 500 980Q485 980 488 960Q450 975 407 965ZM440 915C445 900 475 900 485 915L500 940L490 955M490 870Q495 855 520 862L530 865M495 905L580 835M465 935v4M475 785Q455 830 465 860M530 950Q550 970 548 990"/>
<path d="M177 925C190 900 225 905 235 940L245 970L240 995M177 925Q180 970 215 995"/><circle cx="324" cy="970" r="20"/><path d="M312 965l8 8M330 960l6 8M322 982l10-5"/>
</g>
<use href="#st" x="325" y="593"/><use href="#sp" x="304" y="557"/><use href="#sp" x="411" y="667"/><use href="#cd" x="414" y="732"/>
<use href="#dt" x="343" y="589"/><use href="#dt" x="402" y="608"/><use href="#dt" x="328" y="629"/><use href="#dt" x="346" y="636"/><use href="#dt" x="392" y="648"/><use href="#dt" x="336" y="658"/><use href="#dt" x="303" y="702"/><use href="#dt" x="388" y="716"/><use href="#dt" x="354" y="777"/><use href="#dt" x="410" y="557"/>
<g transform="translate(162 50) scale(.33333 .5593)">
<path d="M345 65C340 30 360 10 400 12M530 30L545 65C590 60 600 75 596 85Q560 105 500 90M470 65Q470 40 530 25M415 85Q425 70 440 80L470 65L500 80Q510 95 490 110Q460 115 440 100L410 98ZM455 82v5M485 80v5M540 65Q560 80 515 85"/>
<path d="M708 48L738 42L735 18L752 38L788 35L775 55L798 70L765 62L735 68L740 52ZM625 108C630 95 700 105 703 118Q680 135 630 122L625 108ZM630 122L620 140L650 150L680 165L720 160M700 125L730 150L779 112L770 130L750 145L790 155Q760 170 725 162M610 140L630 130"/>
<path d="M568 1432L590 1428L625 1445L676 1438L675 1478Q640 1480 615 1468L575 1475Q565 1460 590 1465M568 1432L575 1465M393 1490Q405 1460 475 1458L480 1480Q460 1510 410 1510ZM405 1505L470 1460M480 1470L492 1468L497 1490L470 1502M697 1490Q705 1465 735 1475Q780 1465 783 1485Q780 1510 750 1505Q705 1520 697 1490ZM755 1540Q760 1515 785 1520Q800 1530 795 1540ZM605 1568C590 1520 670 1510 700 1530L706 1568M615 1540Q655 1530 660 1568M333 1555L355 1545L365 1565M400 1568Q420 1550 450 1550L445 1530L460 1535L480 1540L470 1550Q510 1545 540 1558"/>
</g>
<use href="#he" x="418" y="852"/><use href="#sp" x="344" y="888"/><use href="#sp" x="436" y="880"/><use href="#dt" x="376" y="890"/><use href="#st" x="380" y="87"/><use href="#sp" x="406" y="103"/><use href="#dt" x="398" y="136"/>
</g>
<mask id="ink" maskUnits="userSpaceOnUse" x="0" y="0" width="1310" height="927"><g class="ink"><use href="#tile" x="-424"/><use href="#tile"/><use href="#tile" x="424"/><use href="#tile" x="848"/><use href="#tile" x="1272"/></g></mask>
</defs>
<rect width="1310" height="927" fill="#0f0f0f"/>
<g class="hues" mask="url(#ink)"><rect width="1310" height="927" fill="url(#hue)"/><rect width="1310" height="927" fill="url(#warm)"/></g>
</svg>

<svg class="sprite" width="0" height="0" aria-hidden="true"><defs>
<linearGradient id="g-blue" x2="0" y2="1"><stop stop-color="#98bdd6"/><stop offset="1" stop-color="#54799a"/></linearGradient>
<linearGradient id="g-star" x2="0" y2="1"><stop stop-color="#ffe98a"/><stop offset=".5" stop-color="#fff0a0"/><stop offset="1" stop-color="#f39a14"/></linearGradient>
<symbol id="e-back" viewBox="0 0 18 18"><rect width="18" height="18" rx="2.6" fill="#456b8b"/><rect x=".5" y=".5" width="17" height="17" rx="2.2" fill="url(#g-blue)"/><path d="M3 9L9 4V7H15V11H9V14Z" fill="#fff"/></symbol>
<symbol id="e-home" viewBox="0 0 18 18"><path d="M2 7L10 2L17 9V17H2Z" fill="#ead8b2"/><path d="M2 8L6 4L9 7V17H2Z" fill="#f7e6c3"/><path d="M3 1H6V5H3Z" fill="#a8422f"/><path d="M0 9L5 3L12 1L18 9L16 10L11 4L6 4L1 10Z" fill="#c54a36"/><path d="M4 10H8V17H4Z" fill="#8a4a2c"/><path d="M10 10H15V14H10Z" fill="#4a97c7" stroke="#fff" stroke-width=".7"/><path d="M0 15H4V18H0ZM9 16H18V18H9Z" fill="#719742"/></symbol>
<symbol id="e-files" viewBox="0 0 18 18"><path d="M0 4L1 2H6L8 4H17V9H0Z" fill="#c99759"/><path d="M7 3H11V6H7Z" fill="#4d68bf"/><path d="M12 2H17V5H12Z" fill="#e45c4c"/><path d="M2 3H5V6H2Z" fill="#f1d7a6"/><path d="M0 6H8L10 8H18L17 18H1Z" fill="#e5b77d"/></symbol>
<symbol id="e-search" viewBox="0 0 18 18"><path d="M11.5 11.5L16.5 16.5" stroke="#3f474b" stroke-width="2.8" stroke-linecap="round"/><path d="M10 10L13 13" stroke="#89939a" stroke-width="2"/><circle cx="6.9" cy="6.9" r="6.2" fill="#c8c1d0" stroke="#8b8a91" stroke-width="1.2"/><path d="M3 6A4 4 0 0 1 7 3" stroke="#eee" fill="none"/></symbol>
<symbol id="e-star" viewBox="0 0 18 18"><path d="M9 .5L11.5 6.2L18 6.8L13 11L14.8 17.5L9 14L3.2 17.5L5 11L0 6.8L6.5 6.2Z" fill="url(#g-star)"/></symbol>
<symbol id="e-tools" viewBox="0 0 18 18"><path d="M3 16L12 6" stroke="#a7b0b6" stroke-width="2"/><path d="M11 7C9 4 12 1 15 2L13 4L15 6L17 4C18 8 14 9 12 8Z" fill="#a7b0b6"/><path d="M6 6L15 16" stroke="#363334" stroke-width="2.7" stroke-linecap="round"/><path d="M1 6L6 1L11 3L8 4L7 8L5 6L2 9L0 7Z" fill="#7b858c"/></symbol>
<symbol id="e-gear" viewBox="0 0 18 18"><circle cx="9" cy="9" r="7.3" fill="none" stroke="#8f999e" stroke-width="2.6" stroke-dasharray="2.3 1.5"/><circle cx="9" cy="9" r="5.5" fill="none" stroke="#a8b0b4" stroke-width="2.5"/><path d="M9 4V14M4 9H14M5.5 5.5L12.5 12.5M12.5 5.5L5.5 12.5" stroke="#8c969b"/><circle cx="9" cy="9" r="2.4" fill="#515c63" stroke="#c4cacd"/></symbol>
<symbol id="e-bust" viewBox="0 0 18 18"><path d="M0 18Q0 13 7 12V9Q4 7 5 3Q9-2 13 3Q14 7 11 10V12Q18 13 18 18Z" fill="#416b8e"/><path d="M1 17Q3 14 7 13L9 15L12 13L17 16V17Z" fill="#527fa1"/></symbol>
<symbol id="e-shirt" viewBox="0 0 18 18"><path d="M1 4L6 1H12L17 4V17H1Z" fill="#91bfe7"/><path d="M3 5V17M5 6V17M13 6V17M15 5V17" stroke="#d5e9f8"/><path d="M5 2L9 6L13 2L14 5L11 9L9 6L7 9L4 5Z" fill="#377ba8"/><path d="M7.5 6H10.5L10 9L12 16L9 18L6 16L8 9Z" fill="#d8b558"/><path d="M7 13L11 10M7 16L11 13" stroke="#8d6d3e"/></symbol>
<symbol id="e-pencil" viewBox="0 0 18 18"><path d="M.5 5Q0 1 4 .5L7 3L3 7Z" fill="#ec8382"/><path d="M2.6 6.6L6.8 2.4L9 4.5L4.7 8.8Z" fill="#b9bfc2"/><path d="M4.2 8.5L8.5 4.2L16.2 12L12 16.2Z" fill="#f6b421"/><path d="M6 7L14 15" stroke="#ffdc5b"/><path d="M16.2 12L17.7 17.7L12 16.2Z" fill="#efd2a3"/><path d="M16.5 16L17.5 17.5L15.8 17Z" fill="#333"/></symbol>
<symbol id="tail" viewBox="0 0 11 20"><path d="M0 0H5C5 9 6 14 10.5 18C11.3 19 11 20 10 20H0Z"/></symbol>
<symbol id="ticks" viewBox="0 0 18 12"><path d="M1 6L4.5 9.5L11.5 2M8.5 9.5L16.5 2" fill="none" stroke="currentColor" stroke-width="1.8"/></symbol>
</defs></svg>

<div class="app">
<header class="topbar">
<svg class="avatar" viewBox="0 0 42 42"><circle cx="21" cy="21" r="20.7" fill="#111" stroke="#3b2025" stroke-width=".6"/><text class="logo" x="30" y="35" transform="scale(.7 1)">S</text></svg>
<div class="peer"><div class="name">StashifyBot</div><div class="status">bot</div></div>
<svg class="tool" viewBox="0 0 24 24"><circle cx="9.7" cy="9.7" r="6.2"/><path d="M14.2 14.2L20.8 20.8"/></svg>
<svg class="tool dots" viewBox="0 0 24 24"><circle cx="12" cy="6" r="2"/><circle cx="12" cy="12" r="2"/><circle cx="12" cy="18" r="2"/></svg>
</header>
<main class="chat">
<div class="group narrow cut"><div class="keys"><div class="key emo last">
<span><svg><use href="#e-back"/></svg>Back</span></div></div></div>
<div class="out menu"><span>/menu</span><time>06:52 PM</time><svg class="ticks"><use href="#ticks"/></svg><svg class="tail"><use href="#tail"/></svg></div>
<div class="group main"><div class="bubble tall"><div><svg class="em"><use href="#e-home"/></svg> Main Menu<br>Choose action:</div><time>06:52 PM</time></div>
<div class="keys">
<div class="key emo"><span><svg><use href="#e-files"/></svg>Resources</span></div>
<div class="key emo"><span><svg><use href="#e-search"/></svg>Search</span></div>
<div class="key emo"><span><svg><use href="#e-star"/></svg>Favorite</span></div>
<div class="pair"><div class="key emo"><span><svg><use href="#e-tools"/></svg>Manage resources</span></div><div class="key"><span><svg><use href="#e-gear"/></svg>Manage categories</span></div></div>
<div class="pair"><div class="key emo bl"><span><svg><use href="#e-bust"/></svg>Manage users</span></div><div class="key emo br"><span><svg><use href="#e-shirt"/></svg>Manage quizes</span></div></div>
</div></div>
<div class="group enter"><div class="bubble joined"><svg class="tail"><use href="#tail"/></svg><div><svg class="em"><use href="#e-pencil"/></svg> Enter resource text, tags or description</div><time>06:53 PM</time></div>
<div class="keys"><div class="key emo last low"><span><svg><use href="#e-back"/></svg>Back</span></div></div></div>
<div class="out docker"><span>Docker</span><time>06:53 PM</time><svg class="ticks"><use href="#ticks"/></svg><svg class="tail"><use href="#tail"/></svg></div>
<div class="group narrow final"><div class="bubble"><svg class="tail"><use href="#tail"/></svg><div><svg class="em"><use href="#e-pencil"/></svg> Select the appropriate resource</div><time>06:53 PM</time></div>
<div class="keys">
<div class="key"><span>How to use Docker</span></div>
<div class="key"><span>Docker Networking</span></div>
<div class="key"><span>Docker Compose</span></div>
<div class="key"><span>Docker Security</span></div>
<div class="key"><span>Docker Course</span></div>
<div class="key"><span>1/1</span></div>
<div class="key emo last low"><span><svg><use href="#e-back"/></svg>Back</span></div>
</div></div>
</main>
<footer class="composer">
<div class="input"><svg class="tool" viewBox="0 0 24 24"><circle cx="12" cy="12" r="10"/><path d="M6.8 14Q12 20 17.2 14"/><path class="fill" d="M8.5 8A1.2 1.4 0 1 0 8.5 10.8A1.2 1.4 0 1 0 8.5 8ZM15.5 8A1.2 1.4 0 1 0 15.5 10.8A1.2 1.4 0 1 0 15.5 8Z"/></svg>
<span>Message</span>
<svg class="tool clip" viewBox="0 0 24 24"><path d="M17.2 7.1L9.6 14.7A2 2 0 0 0 12.4 17.5L19.4 10.5A4.4 4.4 0 0 0 13.2 4.3L5.6 11.9A6 6 0 0 0 14.1 20.4L20.2 14.3" transform="rotate(-3 12 12)"/></svg>
<svg class="tail"><use href="#tail"/></svg></div>
<div class="mic"><svg viewBox="0 0 24 24"><rect x="8.4" y="2.3" width="7.2" height="12.4" rx="3.6" fill="#fff"/><path d="M4.3 11.2C4.3 20.4 19.7 20.4 19.7 11.2M12 17.8V22" fill="none" stroke="#fff" stroke-width="1.8"/></svg></div>
</footer>
</div>
</body>
</html>
```
FILE: styles.css
```css
* { box-sizing: border-box; }
body { margin: 0; width: 1310px; height: 927px; overflow: hidden; background: #0f0f0f; color: #fff; font-family: Roboto, "Open Sans", sans-serif; }
.wallpaper { position: absolute; left: 0; top: 0; }
.ink { fill: none; stroke: #fff; stroke-width: 1; stroke-linecap: round; stroke-linejoin: round; }
.hues { opacity: .82; }
#tile *, #st, #he, #sp, #dt, #cd, #bn, #dk { vector-effect: non-scaling-stroke; }
.sprite { position: absolute; }
.app { position: absolute; inset: 0; display: flex; flex-direction: column; align-items: center; border-left: 1px solid #303030; }
.topbar { position: relative; z-index: 2; width: 100%; height: 56px; flex: none; display: flex; align-items: center; padding: 0 23px 0 19px; background: #2a2a2a; }
.avatar { width: 42px; height: 42px; margin-right: 18px; overflow: visible; }
.logo { font: bold 39px "DejaVu Serif", serif; fill: #deded8; stroke: #deded8; stroke-width: 2.4; text-anchor: middle; }
.peer { flex: 1; }
.name { font-size: 16px; line-height: 21px; font-weight: 500; margin-top: -1px; }
.status { font-size: 14px; line-height: 18px; color: #aaa; }
.tool { width: 24px; height: 24px; fill: none; stroke: #aaa; stroke-width: 2; }
.tool .fill { fill: #aaa; stroke: none; }
.dots { margin-left: 24px; fill: #aaa; stroke: none; }
.chat { width: 702px; margin-left: 1px; flex: 1; min-height: 0; display: flex; flex-direction: column; align-items: flex-start; justify-content: flex-end; }
.group { flex: none; }
.narrow { width: 316px; }
.main { width: 282px; margin-bottom: 4px; }
.enter { width: 368px; }
.final { margin-bottom: 5px; }
.cut { height: 40px; }
.bubble { position: relative; display: flex; justify-content: space-between; height: 30px; background: #2a2a2a; border-radius: 15px 15px 6px 0; padding: 4px 8px 5px; margin-bottom: 3px; font-size: 16px; line-height: 21px; white-space: nowrap; }
.bubble.tall { height: 51px; border-radius: 15px 15px 6px 6px; }
.bubble.joined { border-top-left-radius: 6px; }
.em { width: 18px; height: 18px; margin: -3px 0 -4px; vertical-align: baseline; }
time { align-self: flex-end; font-size: 12px; line-height: 14px; color: #aaa; white-space: nowrap; margin-bottom: -2px; }
.bubble .tail { position: absolute; width: 11px; height: 20px; left: -6px; bottom: 0; transform: scaleX(-1); fill: #2a2a2a; }
.keys { display: flex; flex-direction: column; gap: 2px; }
.pair { display: grid; grid-template-columns: 140px 140px; gap: 2px; }
.key { position: relative; min-height: 40px; display: flex; align-items: center; justify-content: center; padding: 8px 0; font-size: 14px; line-height: 18px; font-weight: 500; text-align: center; }
.key::before { content: ""; position: absolute; inset: 0; border-radius: 6px; background: #230b2c; mix-blend-mode: plus-lighter; }
.key.last::before { border-radius: 6px 6px 12px 12px; }
.key.bl::before { border-bottom-left-radius: 12px; }
.key.br::before { border-bottom-right-radius: 12px; }
.key span { position: relative; }
.key.emo { padding: 6px 0 10px; }
.pair .key.emo, .key.low { padding: 7px 0 9px; }
.key svg { width: 18px; height: 18px; margin: -4px 3.5px -5px 0; vertical-align: baseline; }
.out { position: relative; align-self: flex-start; flex: none; display: flex; height: 30px; margin: 6px 0; padding: 4px 7px 5px 8px; background: #8774e1; border-radius: 15px 15px 0 15px; font-size: 16px; line-height: 21px; }
.menu { width: 136px; margin-left: 504px; }
.docker { width: 139px; margin-left: 501px; }
.out time { margin-left: auto; color: #cbc1f2; }
.out .ticks { width: 18px; height: 12px; align-self: flex-end; margin-bottom: -1px; }
.out .tail, .input .tail { position: absolute; width: 11px; height: 20px; right: -6px; bottom: 0; fill: #8774e1; }
.composer { width: 702px; margin-left: 1px; height: 74px; flex: none; display: flex; gap: 8px; padding-bottom: 20px; }
.input { position: relative; width: 640px; height: 54px; background: #2a2a2a; border-radius: 15px 15px 0 15px; display: flex; align-items: center; padding: 0 15px; font-size: 16px; color: #98a0a7; }
.input span { flex: 1; margin: -1px 0 0 16px; }
.input .tail { fill: #2a2a2a; }
.mic { width: 54px; height: 54px; border-radius: 50%; background: #8774e1; display: flex; align-items: center; justify-content: center; }
.mic svg { width: 24px; height: 24px; }
```
